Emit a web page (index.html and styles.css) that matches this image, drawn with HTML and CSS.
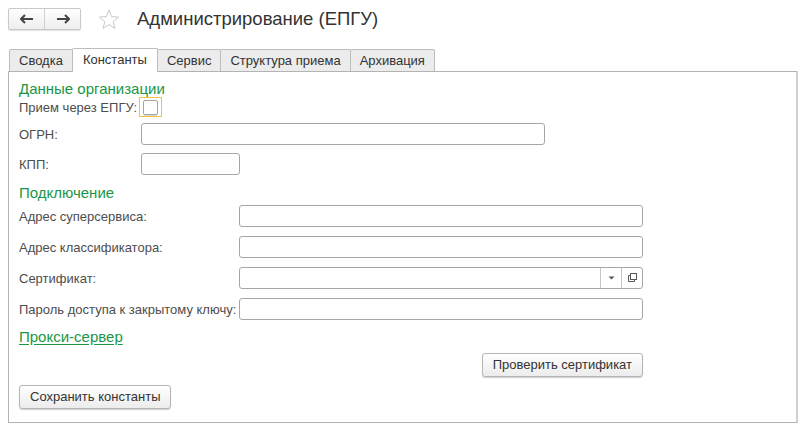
FILE: index.html
```html
<!DOCTYPE html>
<html lang="ru">
<head>
<meta charset="utf-8">
<link rel="stylesheet" href="styles.css">
</head>
<body>
<div class="page">
  <div class="topbar">
    <div class="navgroup">
      <div class="navbtn"><svg width="14" height="10" viewBox="0 0 14 10"><path d="M1 5H13" stroke="#444" stroke-width="2"/><path d="M5 1L1 5L5 9" fill="none" stroke="#444" stroke-width="2"/></svg></div>
      <div class="navbtn"><svg width="14" height="10" viewBox="0 0 14 10"><path d="M1 5H13" stroke="#444" stroke-width="2"/><path d="M9 1L13 5L9 9" fill="none" stroke="#444" stroke-width="2"/></svg></div>
    </div>
    <svg class="star" width="22" height="21" viewBox="0 0 22 21"><path d="M11 1L13.6 7.6L20.6 8.1L15.2 12.6L16.9 19.4L11 15.6L5.1 19.4L6.8 12.6L1.4 8.1L8.4 7.6Z" fill="none" stroke="#c8c8c8" stroke-width="1"/></svg>
    <div class="title">Администрирование (ЕПГУ)</div>
  </div>

  <div class="tabs">
    <div class="tab">Сводка</div>
    <div class="tab active">Константы</div>
    <div class="tab">Сервис</div>
    <div class="tab">Структура приема</div>
    <div class="tab">Архивация</div>
  </div>

  <div class="panel">
    <div class="section">Данные организации</div>
    <div class="row r-check">
      <div class="label">Прием через ЕПГУ:</div>
      <div class="checkwrap"><div class="checkbox"></div></div>
    </div>
    <div class="row r-ogrn">
      <div class="label w1">ОГРН:</div>
      <div class="input ogrn"></div>
    </div>
    <div class="row r-kpp">
      <div class="label w1">КПП:</div>
      <div class="input kpp"></div>
    </div>
    <div class="section s2">Подключение</div>
    <div class="row r-a">
      <div class="label w2">Адрес суперсервиса:</div>
      <div class="input wide"></div>
    </div>
    <div class="row r-b">
      <div class="label w2">Адрес классификатора:</div>
      <div class="input wide"></div>
    </div>
    <div class="row r-b">
      <div class="label w2">Сертификат:</div>
      <div class="input wide combo">
        <div class="cfield"></div>
        <div class="cbtn"><svg width="7" height="4" viewBox="0 0 7 4"><path d="M0.5 0.5H6.5L3.5 3.5Z" fill="#555"/></svg></div>
        <div class="cbtn"><svg width="11" height="10" viewBox="0 0 11 10"><path d="M3.5 2.5H1.5V8.5H7.5V6.5" fill="none" stroke="#555" stroke-width="1"/><rect x="3.5" y="0.5" width="6" height="6" fill="none" stroke="#555" stroke-width="1"/></svg></div>
      </div>
    </div>
    <div class="row r-b">
      <div class="label w2">Пароль доступа к закрытому ключу:</div>
      <div class="input wide"></div>
    </div>
    <a class="link" href="#">Прокси-сервер</a>
    <div class="btnrow">
      <div class="btn">Проверить сертификат</div>
    </div>
    <div class="btnrow2">
      <div class="btn">Сохранить константы</div>
    </div>
  </div>
</div>
</body>
</html>
```

FILE: styles.css
```css
html, body {
  margin: 0;
  padding: 0;
  background: #fff;
}
body {
  font-family: Arial, "Liberation Sans", sans-serif;
  font-size: 13px;
  color: #4d4d4d;
}
.page {
  padding: 8px 14px 0 8px;
  width: 790px;
}
.topbar {
  display: flex;
  align-items: center;
  height: 22px;
}
.navgroup {
  display: flex;
  border: 1px solid #c9c9c9;
  border-radius: 2px;
  background: linear-gradient(#fefefe, #eeeeee);
  box-shadow: 0 1px 1px rgba(0,0,0,0.12);
  height: 20px;
}
.navbtn {
  width: 35px;
  display: flex;
  align-items: center;
  justify-content: center;
}
.navbtn + .navbtn {
  border-left: 1px solid #d0d0d0;
}
.star {
  margin-left: 17px;
}
.title {
  margin-left: 17px;
  font-size: 18.5px;
  color: #333;
  margin-top: -1px;
}
.tabs {
  display: flex;
  margin-top: 19px;
  padding-left: 1px;
  height: 22px;
  position: relative;
  z-index: 1;
}
.tab {
  height: 21px;
  line-height: 21px;
  padding: 0 9px;
  border: 1px solid #bdbdbd;
  border-bottom: none;
  border-radius: 2px 2px 0 0;
  background: #ececec;
  color: #333;
  margin-left: -1px;
}
.tab:first-child { margin-left: 0; }
.tab.active {
  background: #fff;
  height: 23px;
  margin-top: -1px;
  padding: 0 10px;
}
.panel {
  border: 1px solid #b3b3b3;
  border-right: 2px solid #cfcfcf;
  height: 352px;
  padding: 8px 0 0 10px;
  box-sizing: border-box;
}
.section {
  font-size: 15px;
  color: #1a9646;
  line-height: 17px;
}
.section.s2 {
  margin-top: 9px;
}
.row {
  display: flex;
  align-items: center;
}
.label {
  flex: none;
  white-space: nowrap;
}
.r-check { margin-top: 0; height: 20px; }
.checkwrap {
  width: 21px;
  height: 18px;
  border: 1px solid #f0c43a;
  margin-left: 2px;
  display: flex;
  align-items: center;
  justify-content: center;
}
.checkbox {
  width: 13px;
  height: 13px;
  border: 1px solid #a6a6a6;
  border-radius: 2px;
  box-shadow: 0 1px 0 #d8d8d8;
}
.w1 { width: 122px; }
.w2 { width: 220px; }
.r-ogrn { margin-top: 6px; }
.r-kpp { margin-top: 8px; }
.r-a { margin-top: 4px; }
.r-b { margin-top: 9px; }
.input {
  height: 20px;
  border: 1px solid #a6a6a6;
  border-radius: 3px;
  background: #fff;
}
.ogrn { width: 402px; }
.kpp { width: 97px; }
.wide { width: 402px; }
.combo {
  display: flex;
}
.cfield { flex: 1; }
.cbtn {
  width: 20px;
  border-left: 1px solid #c6c6c6;
  display: flex;
  align-items: center;
  justify-content: center;
}
.link {
  display: inline-block;
  margin-top: 8px;
  font-size: 15px;
  color: #1a9646;
  text-decoration: underline;
  text-underline-offset: 2px;
}
.btnrow {
  display: flex;
  justify-content: flex-end;
  width: 624px;
  margin-top: 8px;
}
.btnrow2 {
  margin-top: 8px;
  display: flex;
}
.btn {
  height: 22px;
  line-height: 22px;
  padding: 0 10px;
  border: 1px solid #b5b5b5;
  border-radius: 3px;
  background: linear-gradient(#ffffff, #ececec);
  box-shadow: 0 1px 1px rgba(0,0,0,0.2);
  color: #333;
}
```
